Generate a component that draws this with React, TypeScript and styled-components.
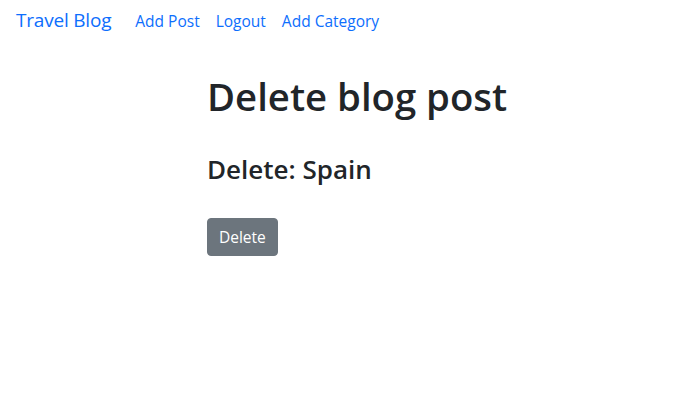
import styled, { createGlobalStyle } from 'styled-components';

const GlobalStyle = createGlobalStyle`
  body {
    margin: 0;
    background: #fff;
    font-family: "Open Sans", "Noto Sans", sans-serif;
    color: #212529;
  }
`;

const Navbar = styled.nav`
  display: flex;
  align-items: baseline;
  padding: 5px 16px;
  height: 30px;
`;

const Brand = styled.a`
  font-size: 19px;
  letter-spacing: -0.2px;
  line-height: 30px;
  color: #0d6efd;
  text-decoration: none;
  margin-right: 16px;
`;

const NavLink = styled.a`
  font-size: 15.5px;
  line-height: 24px;
  padding: 0 8px;
  color: #0d6efd;
  text-decoration: none;
`;

const Main = styled.main`
  padding: 34px 0 0 207px;
`;

const Title = styled.h1`
  font-size: 38.3px;
  font-weight: 600;
  line-height: 1.2;
  margin: 0 0 34px;
`;

const SubTitle = styled.h2`
  font-size: 26px;
  font-weight: 600;
  line-height: 1.2;
  margin: 0 0 33px;
`;

const Button = styled.button`
  font-family: inherit;
  font-size: 15.5px;
  line-height: 24px;
  padding: 6px 11px;
  color: #fff;
  background: #6c757d;
  border: 1px solid #6c757d;
  border-radius: 4px;
  cursor: pointer;
`;

const App = () => {
  return (
    <>
      <GlobalStyle />
      <Navbar>
        <Brand href="#">Travel Blog</Brand>
        <NavLink href="#">Add Post</NavLink>
        <NavLink href="#">Logout</NavLink>
        <NavLink href="#">Add Category</NavLink>
      </Navbar>
      <Main>
        <Title>Delete blog post</Title>
        <SubTitle>Delete: Spain</SubTitle>
        <form>
          <Button type="submit">Delete</Button>
        </form>
      </Main>
    </>
  );
};

export default App;
